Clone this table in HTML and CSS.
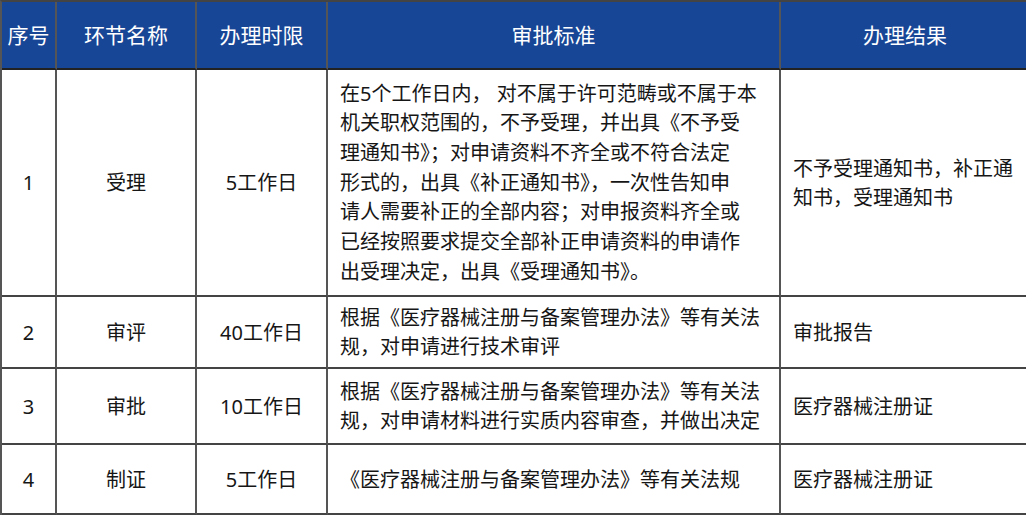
FILE: index.html
```html
<!DOCTYPE html>
<html lang="zh-CN">
<head>
<meta charset="utf-8">
<title>办理流程</title>
<link rel="stylesheet" href="styles.css">
</head>
<body>
<div class="grid">
  <div class="cell head">序号</div>
  <div class="cell head">环节名称</div>
  <div class="cell head">办理时限</div>
  <div class="cell head">审批标准</div>
  <div class="cell head">办理结果</div>

  <div class="cell c">1</div>
  <div class="cell c">受理</div>
  <div class="cell c">5工作日</div>
  <div class="cell l tall">在5个工作日内， 对不属于许可范畴或不属于本<br>机关职权范围的，不予受理，并出具《不予受<br>理通知书》；对申请资料不齐全或不符合法定<br>形式的，出具《补正通知书》，一次性告知申<br>请人需要补正的全部内容；对申报资料齐全或<br>已经按照要求提交全部补正申请资料的申请作<br>出受理决定，出具《受理通知书》。</div>
  <div class="cell l">不予受理通知书，补正通<br>知书，受理通知书</div>

  <div class="cell c">2</div>
  <div class="cell c">审评</div>
  <div class="cell c">40工作日</div>
  <div class="cell l">根据《医疗器械注册与备案管理办法》等有关法<br>规，对申请进行技术审评</div>
  <div class="cell l">审批报告</div>

  <div class="cell c">3</div>
  <div class="cell c">审批</div>
  <div class="cell c">10工作日</div>
  <div class="cell l">根据《医疗器械注册与备案管理办法》等有关法<br>规，对申请材料进行实质内容审查，并做出决定</div>
  <div class="cell l">医疗器械注册证</div>

  <div class="cell c">4</div>
  <div class="cell c">制证</div>
  <div class="cell c">5工作日</div>
  <div class="cell l">《医疗器械注册与备案管理办法》等有关法规</div>
  <div class="cell l">医疗器械注册证</div>
</div>
</body>
</html>
```

FILE: styles.css
```css
html, body {
  margin: 0;
  padding: 0;
  overflow: hidden;
  background: #ffffff;
}

.grid {
  display: grid;
  grid-template-columns: 55px 140px 131px 453px 250px;
  grid-template-rows: 68px 227px 72px 76px 70px;
  width: max-content;
  border-left: 2px solid #555;
  border-top: 2px solid #444;
  font-family: "Noto Sans", "Noto Sans CJK SC", sans-serif;
  font-size: 20px;
  color: #161616;
}

.cell {
  box-sizing: border-box;
  border-right: 2px solid #555;
  border-bottom: 2px solid #444;
  display: flex;
  align-items: center;
  line-height: 29px;
  white-space: nowrap;
}

.head {
  background: #184696;
  color: #ffffff;
  font-size: 21px;
  justify-content: center;
  border-bottom-color: #222;
}

.c {
  justify-content: center;
  text-align: center;
}

.l {
  justify-content: flex-start;
  padding: 0 12px;
}

.tall {
  line-height: 29.7px;
}
```
